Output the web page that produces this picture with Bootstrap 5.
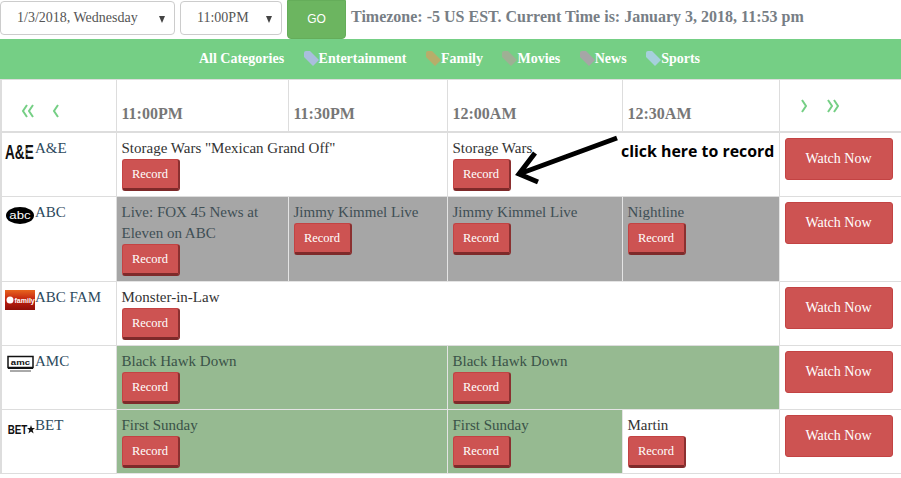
<!DOCTYPE html>
<html lang="en"><head><meta charset="utf-8"><title>TV Guide</title>
<link rel="stylesheet" href="https://cdn.jsdelivr.net/npm/bootstrap@5.3.0/dist/css/bootstrap.min.css">
<style>
html,body{height:478px;overflow:hidden}
body{font-family:"Liberation Serif",serif;font-size:15px;color:#333;background:#fff;position:relative}
.topbar{height:39px;gap:5px}
.pick{height:34px;margin-top:1px;border:1px solid #ccc;border-radius:4px;background:#fff;color:#555;font-size:14px;line-height:32px;position:relative}
.pick::after{content:"";position:absolute;right:9px;top:14px;border-left:3.5px solid transparent;border-right:3.5px solid transparent;border-top:7px solid #444}
.pick-date{width:175px;padding-left:16px}
.pick-time{width:102px;padding-left:16px}
.gobtn{width:59px;height:39px;background:#6cb560;border:1px solid #65ad5a;border-radius:0 0 4px 4px;color:#fff;font-size:12px;line-height:37px;text-align:center;font-family:"Liberation Sans",sans-serif}
.tz{font-weight:700;color:#777e85;font-size:16px;line-height:34px;white-space:nowrap}
.catbar{height:40px;background:#75cf85;gap:19.5px;color:#fff;font-weight:700;font-size:14px;line-height:36px;padding-right:2px}
.catbar span{display:flex;align-items:center}
.catbar svg{margin-bottom:2px}
.guide{table-layout:fixed;width:901px;border-collapse:collapse;margin:0}
.guide td,.guide th{border:1px solid #ddd;padding:5px 5px 0;vertical-align:top;line-height:21px;overflow:hidden}
.guide tr>:first-child{border-left:2px solid #ddd;padding-left:3px;padding-right:0}
.guide tr>:last-child{border-right:0}
.headrow{height:52px}
.headrow th{color:#777;font-size:16px;font-weight:700;vertical-align:bottom;padding-bottom:7px;border-bottom-width:2px}
.headrow th.tm{padding-top:20px}
.navl{display:block;margin:0 0 5px 16px}
.navr{display:block;margin:0 0 10px 16px}
.rowf{height:65px}.rowa{height:64px}.rowb{height:85px}
.rec{display:block;width:58px;height:32px;background:#cd5352;border:1px solid #c34343;border-bottom:3px solid #7e2a2a;border-right:2px solid #8b3030;border-radius:3px;color:#fff;font-size:12.5px;line-height:29px;text-align:center;text-decoration:none}
.watch{display:block;width:108px;height:42px;background:#cd5352;border:1px solid #c34343;border-radius:3px;color:#fff;font-size:14px;line-height:39px;text-align:center;text-decoration:none}
.chan{color:#2d4a5e;white-space:nowrap;display:flex;align-items:flex-start}
.chan svg{flex:none;margin-top:3px;overflow:visible}
.off{background:#a6a6a6;color:#3f4f55}
.mov{background:#96ba91;color:#3a5248}
.guide td.off,.guide td.mov{border-color:#e4e4e4}
.callout{position:absolute;left:621px;top:140px;font-family:"Open Sans",sans-serif;font-weight:700;font-size:15.9px;line-height:22px;color:#000;white-space:nowrap}
.arrow{position:absolute;left:515px;top:134px}
</style></head>
<body>
<div class="topbar d-flex">
 <div class="pick pick-date">1/3/2018, Wednesday</div>
 <div class="pick pick-time">11:00PM</div>
 <div class="gobtn">GO</div>
 <div class="tz">Timezone: -5 US EST. Current Time is: January 3, 2018, 11:53 pm</div>
</div>
<div class="catbar d-flex justify-content-center">
 <span>All Categories</span>
 <span><svg width="15" height="15" viewBox="0 0 15 15"><path d="M0 2Q0 0 2 0H6L15 9 9 15 0 6Z" fill="#a9bedd"/></svg>Entertainment</span>
 <span><svg width="15" height="15" viewBox="0 0 15 15"><path d="M0 2Q0 0 2 0H6L15 9 9 15 0 6Z" fill="#b7ad6a"/></svg>Family</span>
 <span><svg width="15" height="15" viewBox="0 0 15 15"><path d="M0 2Q0 0 2 0H6L15 9 9 15 0 6Z" fill="#9eb094"/></svg>Movies</span>
 <span><svg width="15" height="15" viewBox="0 0 15 15"><path d="M0 2Q0 0 2 0H6L15 9 9 15 0 6Z" fill="#a6a6a6"/></svg>News</span>
 <span><svg width="15" height="15" viewBox="0 0 15 15"><path d="M0 2Q0 0 2 0H6L15 9 9 15 0 6Z" fill="#a6d0dc"/></svg>Sports</span>
</div>
<table class="guide">
<colgroup><col style="width:115px"><col style="width:172px"><col style="width:159px"><col style="width:175px"><col style="width:157px"><col style="width:123px"></colgroup>
<tr class="headrow">
 <th><svg width="50" height="16" viewBox="0 0 50 16" class="navl"><path d="M6 2 2 8l4 6M12 2 8 8l4 6M37 2l-4 6 4 6" fill="none" stroke="#75cf85" stroke-width="2"/></svg></th>
 <th class="tm">11:00PM</th><th class="tm">11:30PM</th><th class="tm">12:00AM</th><th class="tm">12:30AM</th>
 <th><svg width="50" height="16" viewBox="0 0 50 16" class="navr"><path d="M1 2l4 6-4 6M27 2l4 6-4 6M33 2l4 6-4 6" fill="none" stroke="#75cf85" stroke-width="2"/></svg></th>
</tr>
<tr class="rowf">
 <td><div class="chan"><svg width="30" height="20" viewBox="0 0 30 20"><text transform="scale(.68 1)" x="0" y="17.500" font-family="Liberation Sans" font-size="20" font-weight="700" fill="#111">A&amp;E</text><path d="M21 8h8M21 13h8" stroke="#fff"/></svg>A&amp;E</div></td>
 <td colspan="2">Storage Wars "Mexican Grand Off"<a class="rec">Record</a></td>
 <td colspan="2">Storage Wars<a class="rec">Record</a></td>
 <td><a class="watch">Watch Now</a></td>
</tr>
<tr class="rowb">
 <td><div class="chan"><svg width="30" height="20" viewBox="0 0 30 20"><ellipse cx="15" cy="10.500" rx="14" ry="8.500" fill="#000"/><text transform="scale(1.200 1)" x="12.500" y="14" font-family="Liberation Sans" font-size="11" fill="#fff" text-anchor="middle">abc</text></svg>ABC</div></td>
 <td class="off">Live: FOX 45 News at Eleven on ABC<a class="rec">Record</a></td>
 <td class="off">Jimmy Kimmel Live<a class="rec">Record</a></td>
 <td class="off">Jimmy Kimmel Live<a class="rec">Record</a></td>
 <td class="off">Nightline<a class="rec">Record</a></td>
 <td><a class="watch">Watch Now</a></td>
</tr>
<tr class="rowa">
 <td><div class="chan"><svg width="30" height="20" viewBox="0 0 30 20"><defs><linearGradient id="fam" x1="0" y1="0" x2="0" y2="1"><stop offset="0" stop-color="#e8641e"/><stop offset=".5" stop-color="#c1200f"/><stop offset="1" stop-color="#8f0f08"/></linearGradient></defs><rect width="30" height="20" fill="url(#fam)"/><circle cx="5" cy="10" r="3.500" fill="#fff"/><text x="9.500" y="12.500" font-family="Liberation Sans" font-size="7" font-weight="700" fill="#fff">family</text></svg>ABC FAM</div></td>
 <td colspan="4">Monster-in-Law<a class="rec">Record</a></td>
 <td><a class="watch">Watch Now</a></td>
</tr>
<tr class="rowa">
 <td><div class="chan"><svg width="30" height="20" viewBox="0 0 30 20"><rect x="3" y="2.500" width="25" height="11" fill="none" stroke="#111" stroke-width="1.500"/><rect x="3" y="13" width="25" height="2" fill="#111"/><text transform="scale(1.200 1)" x="12.900" y="11.500" font-family="Liberation Sans" font-size="8" font-weight="700" fill="#111" text-anchor="middle">amc</text><path d="M5 17h21" stroke="#555"/></svg>AMC</div></td>
 <td colspan="2" class="mov">Black Hawk Down<a class="rec">Record</a></td>
 <td colspan="2" class="mov">Black Hawk Down<a class="rec">Record</a></td>
 <td><a class="watch">Watch Now</a></td>
</tr>
<tr class="rowa">
 <td><div class="chan"><svg width="30" height="20" viewBox="0 0 30 20"><text transform="scale(.76 1)" x="3.500" y="16" font-family="Liberation Sans" font-size="13" font-weight="700" fill="#111">BET</text><path d="M26 7l1 3h3l-2.400 2 1 3.500-2.600-2-2.600 2 1-3.500-2.400-2h3z" fill="#111"/></svg>BET</div></td>
 <td colspan="2" class="mov">First Sunday<a class="rec">Record</a></td>
 <td class="mov">First Sunday<a class="rec">Record</a></td>
 <td>Martin<a class="rec">Record</a></td>
 <td><a class="watch">Watch Now</a></td>
</tr>
</table>
<svg class="arrow" width="110" height="60" viewBox="0 0 110 60"><path d="M102 4 4 40M20 19 4 40 23 48" fill="none" stroke="#000" stroke-width="5"/></svg>
<div class="callout">click here to record</div>
</body></html>
